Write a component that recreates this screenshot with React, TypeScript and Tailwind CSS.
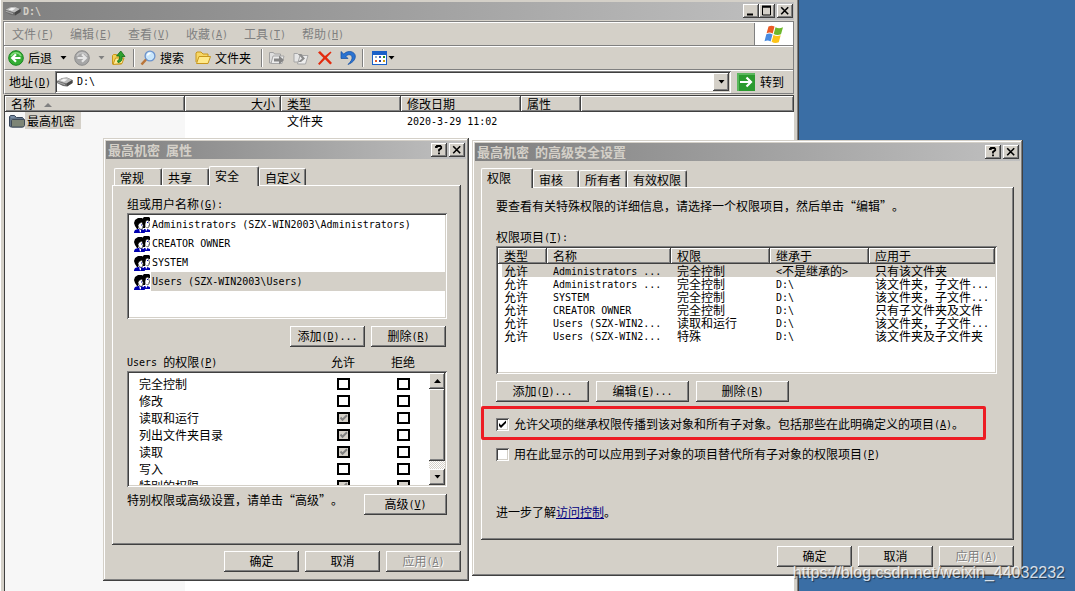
import { useState, type ReactNode } from "react";

const raised =
  "bg-[#d4d0c8] shadow-[inset_-1px_-1px_#404040,inset_1px_1px_#fff,inset_-2px_-2px_#808080]";
const sunken =
  "bg-white shadow-[inset_1px_1px_#808080,inset_-1px_-1px_#fff,inset_2px_2px_#404040,inset_-2px_-2px_#d4d0c8]";
const windowFrame =
  "bg-[#d4d0c8] shadow-[inset_-1px_-1px_#404040,inset_1px_1px_#d4d0c8,inset_-2px_-2px_#808080,inset_2px_2px_#fff]";
const headerCell =
  "bg-[#d4d0c8] shadow-[inset_-1px_-1px_#404040,inset_1px_1px_#fff,inset_-2px_-2px_#808080]";
const halfWidth =
  "font-['DejaVu_Sans_Mono','Liberation_Mono',monospace] text-[10px] leading-none whitespace-pre align-[1px]";

// Half-width characters sit on a 6px grid next to the 12px ideographs.
function Txt({ children, hotkey }: { children: string; hotkey?: string }) {
  return (
    <>
      {children.split(/([\x20-\x7e]+)/).map((part, index) =>
        index % 2 ? (
          <span key={index} className={halfWidth}>
            {part}
          </span>
        ) : (
          part
        )
      )}
      {hotkey ? (
        <span className={halfWidth}>
          (<u className="underline-offset-1">{hotkey}</u>)
        </span>
      ) : null}
    </>
  );
}

type PushButtonProps = {
  label: string;
  hotkey?: string;
  tail?: string;
  disabled?: boolean;
  width?: string;
};

function PushButton({ label, hotkey, tail, disabled, width = "w-[75px]" }: PushButtonProps) {
  return (
    <button
      type="button"
      disabled={disabled}
      className={`${raised} ${width} h-[21px] shrink-0 pb-[2px] text-center whitespace-nowrap ${
        disabled ? "text-[#808080] [text-shadow:1px_1px_#fff]" : ""
      }`}
    >
      <Txt hotkey={hotkey}>{label}</Txt>
      {tail ? <Txt>{tail}</Txt> : null}
    </button>
  );
}

function CaptionButton({ name, children }: { name: string; children: ReactNode }) {
  return (
    <button type="button" aria-label={name} className={`${raised} flex h-[14px] w-4 items-center justify-center`}>
      <svg viewBox="0 0 16 14" className="h-[14px] w-4" fill="none" stroke="#000" strokeWidth="1.6" aria-hidden="true">
        {children}
      </svg>
    </button>
  );
}

const closeGlyph = <path d="M4.2 3.2l7 7M11.2 3.2l-7 7" />;
const helpGlyph = <path d="M5 5V3.8h1V3h3.4l.8.8v1.4L8 7v1.6M8 9.6v1.6" strokeWidth="1.8" />;

function Dialog({ title, className, children }: { title: string; className: string; children: ReactNode }) {
  return (
    <section aria-label={title} className={`absolute ${windowFrame} p-[3px] ${className}`}>
      <header className="flex h-[18px] items-center gap-[2px] bg-linear-to-r from-[#808080] to-[#c0c0c0] pr-px pl-[2px]">
        <h2 className="flex-1 text-[13px] leading-[18px] font-bold text-[#d4d0c8]">
          <Txt>{title}</Txt>
        </h2>
        <CaptionButton name="帮助">{helpGlyph}</CaptionButton>
        <CaptionButton name="关闭">{closeGlyph}</CaptionButton>
      </header>
      {children}
    </section>
  );
}

type TabItem = { label: string; width: string };

function TabStrip({ tabs, initial, className }: { tabs: TabItem[]; initial: number; className?: string }) {
  const [active, setActive] = useState(initial);

  return (
    <div role="tablist" className={`relative z-10 mt-[7px] -mb-px flex h-5 items-end pb-px ${className ?? ""}`}>
      {tabs.map((tab, index) => (
        <button
          key={tab.label}
          type="button"
          role="tab"
          aria-selected={index === active}
          onClick={() => setActive(index)}
          className={`${tab.width} rounded-t-[2px] border-t border-r border-l border-t-white border-r-[#404040] border-l-white bg-[#d4d0c8] pl-[5px] text-left shadow-[inset_-1px_0_#808080] ${
            index === active ? "-mb-px h-5 pb-[2px]" : "h-[17px] leading-[17px]"
          }`}
        >
          {tab.label}
        </button>
      ))}
    </div>
  );
}

function UsersIcon() {
  return (
    <svg viewBox="0 0 16 16" className="size-4 shrink-0" aria-hidden="true">
      <path d="M10 12h3l3 1v2h-6z" fill="#0000b0" />
      <path d="M8 2l2-2h5l1 1v3h-3l-1 3-1 4H9L8 8z" fill="#000" />
      <path d="M12 3.500l2.500-.5.5 3 1 2h-1v2l-2 1-2-1V7z" fill="#fff" stroke="#000" strokeWidth=".6" />
      <path d="M11 10l2 1v2l-1 1z" fill="#fff" />
      <path d="M0 15l1-2 3-1h3l3 1 1 3H0z" fill="#0000b0" />
      <path d="M0 6l1-3 3-2h4l1 2-1 2-3 2-1 5H3L1 9z" fill="#000" />
      <path d="M5 6.500l3-1.500.7 2.500 1 2h-1v2L7 12.500l-2-1-1-3z" fill="#fff" stroke="#000" strokeWidth=".6" />
      <path d="M5 12l2 1v2l-1 .5z" fill="#fff" />
      <path d="M7 7.500h1v1H7zM13 5h1v1h-1z" fill="#0000b0" />
    </svg>
  );
}

function DriveIcon() {
  return (
    <svg viewBox="0 0 16 12" className="h-3 w-4 shrink-0" aria-hidden="true">
      <path d="M0 5l5-3 5-.5L15.500 4v3L10 10.500 6 10 0 7z" fill="#6b6b6b" />
      <path d="M.5 4.800L5 2.200 10 1.700l5 2.300-5.500 3.500z" fill="#bdbdbd" />
      <path d="M3.500 4.500L6.500 2.700l4 .8L7 5.700z" fill="#f4f4f4" />
      <path d="M9.500 7.500L15.500 4v3L10 10.500z" fill="#484848" />
      <path d="M.5 5.500l7.500 2.500v1.300L.5 6.700z" fill="#a5a5a5" />
    </svg>
  );
}

function FolderIcon({ dim }: { dim?: boolean }) {
  return dim ? (
    <svg viewBox="0 0 16 14" className="h-[14px] w-4 shrink-0" aria-hidden="true">
      <path d="M.5 12V2.500l1-1h4l2 2h6l1 1V12l-1 1h-12z" fill="#64768a" stroke="#38465a" />
      <path d="M2.500 12.500v-6l1-1h12v6l-1 1.500h-11z" fill="#7d8576" stroke="#3f4b58" />
      <path d="M2 3h3.500" stroke="#8ea5c0" />
    </svg>
  ) : (
    <svg viewBox="0 0 16 14" className="h-[14px] w-4 shrink-0" aria-hidden="true">
      <path d="M1 11V2l1-1h4l2 2h5v3" fill="#f7d765" stroke="#c8961c" />
      <path d="M1.500 12.500L4 5.500h11.500L13 12.500z" fill="#ffe98a" stroke="#c8961c" />
    </svg>
  );
}

function DownArrow({ muted }: { muted?: boolean }) {
  return (
    <svg viewBox="0 0 7 4" className="h-1 w-[7px] shrink-0" aria-hidden="true">
      <path d="M.5 0h6L3.500 3.500z" fill={muted ? "#808080" : "#000"} />
    </svg>
  );
}

function RoundArrow({ muted }: { muted?: boolean }) {
  return (
    <svg viewBox="0 0 16 16" className="size-4 shrink-0" aria-hidden="true">
      <circle cx="8" cy="8" r="7.300" fill={muted ? "#a6a6a6" : "#35ae35"} stroke={muted ? "#8c8c8c" : "#16831d"} />
      <path d="M3 6a5.500 5.500 0 0 1 10 0" fill="none" stroke={muted ? "#c4c4c4" : "#80da77"} strokeWidth="1.500" />
      <path
        d={muted ? "M3.500 8h8M8 4.200L11.800 8 8 11.800" : "M12.500 8h-8M8 4.200L4.200 8 8 11.800"}
        fill="none"
        stroke={muted ? "#e6e6e6" : "#fff"}
        strokeWidth="2.200"
      />
    </svg>
  );
}

function FolderUpIcon() {
  return (
    <svg viewBox="0 0 16 16" className="size-4" aria-hidden="true">
      <path d="M1.500 14V5.500l1-1h3l1 1h4V14z" fill="#f3cf56" stroke="#c8961c" />
      <path d="M2 14.500L4.500 8H13l-2 5.500z" fill="#ffec93" stroke="#c8961c" />
      <path d="M7 12.500c3.500-.5 4.500-2.500 4-6h3L9.800 1 5.500 6h2.800c.5 2.500.2 4-1.800 4.800z" fill="#2fa12f" stroke="#126b16" strokeWidth=".8" />
    </svg>
  );
}

function SearchIcon() {
  return (
    <svg viewBox="0 0 16 16" className="size-4 shrink-0" aria-hidden="true">
      <path d="M6.500 9L1.500 14.500" stroke="#b9753a" strokeWidth="2.600" />
      <circle cx="10" cy="6" r="4.900" fill="#c9e6fb" stroke="#6c93cc" strokeWidth="1.300" />
      <path d="M7.500 5.500c.3-1.500 1.500-2.300 3-2.300" fill="none" stroke="#fff" strokeWidth="1.400" />
    </svg>
  );
}

function MoveToIcon() {
  return (
    <svg viewBox="0 0 16 16" className="size-4" aria-hidden="true">
      <path d="M.5 13V2.500h4l1 1.500h6v9z" fill="#dedede" stroke="#a0a0a0" />
      <path d="M2 13.500L4 6h11l-2 7.500z" fill="#ececec" stroke="#a6a6a6" />
      <path d="M5 8.500h5V5.500l5 4.500-5 4.500v-3H5z" fill="#858585" />
    </svg>
  );
}

function CopyToIcon() {
  return (
    <svg viewBox="0 0 16 16" className="size-4" aria-hidden="true">
      <path d="M1 12V3.500h3.500l1 1H9V12z" fill="#e6e6e6" stroke="#a6a6a6" />
      <path d="M4.500 14L7 5.500h8L12.500 14z" fill="#ededed" stroke="#a6a6a6" />
      <path d="M5 4l4 4.500L5 12h3l4-3.500L8 4z" fill="#8c8c8c" />
    </svg>
  );
}

function DeleteIcon() {
  return (
    <svg viewBox="0 0 16 16" className="size-4" aria-hidden="true">
      <path d="M1 2.500L3 1l5 5 5.500-4.500 1 1L9.800 7.500 15 13l-1.800 1.500L8 9.300 2.500 15 1 13.800 6.300 7.800z" fill="#e32b0e" />
    </svg>
  );
}

function UndoIcon() {
  return (
    <svg viewBox="0 0 16 16" className="size-4" aria-hidden="true">
      <path d="M1 1.500v7h7L5.800 6.200C8 4 11.500 4.200 12 7c.4 2.500-1 4.300-4 7.500 5-2 7.500-5 7.300-8.500C15 1.500 8-.5 3.800 4z" fill="#2a73d2" stroke="#134c9f" strokeWidth=".7" />
    </svg>
  );
}

function ViewsIcon() {
  return (
    <svg viewBox="0 0 16 14" className="h-[14px] w-4" shapeRendering="crispEdges" aria-hidden="true">
      <path d="M.5.5h14v13H.5z" fill="#fff" stroke="#1960c8" />
      <path d="M0 0h15v4H0z" fill="#1960c8" />
      <path d="M3 5h2v2H3z" fill="#96aec4" />
      <path d="M7 5h2v2H7z" fill="#3456c0" />
      <path d="M11 5h2v2h-2z" fill="#228b22" />
      <path d="M3 9h2v2H3z" fill="#e35d28" />
      <path d="M7 9h2v2H7z" fill="#23419c" />
      <path d="M11 9h2v2h-2z" fill="#d19b12" />
    </svg>
  );
}

function WindowsFlag() {
  return (
    <svg viewBox="0 0 20 19" className="h-[19px] w-5" aria-hidden="true">
      <path d="M4.500 1.500C7 .2 8.500.5 10.500 1.600L8.700 8.500C6.500 7.300 5 7.300 2.600 8.300z" fill="#ea5a24" />
      <path d="M11.500 2.200c2.500 1.300 4.500 1.300 7.500 0l-2 7c-2.700 1.200-5 1-7.300-.2z" fill="#6db72c" />
      <path d="M2.300 9.300c2.400-1 4-1 6.200.2l-1.900 7C4.500 15.300 2.900 15.300.5 16.300z" fill="#4a8be0" />
      <path d="M9.500 10c2.400 1.300 4.400 1.300 7.200.2l-1.900 7c-2.800 1.200-4.800 1-7.200-.4z" fill="#fcc419" />
    </svg>
  );
}

function ToolSeparator({ className }: { className: string }) {
  return <span className={`h-[18px] w-[2px] shrink-0 border-r border-l border-r-white border-l-[#808080] ${className}`} />;
}

const menus = [
  ["文件", "F"],
  ["编辑", "E"],
  ["查看", "V"],
  ["收藏", "A"],
  ["工具", "T"],
  ["帮助", "H"]
];

function Explorer() {
  return (
    <main className="absolute inset-y-0 left-0 flex w-[799px] flex-col bg-[#d4d0c8] pt-[2px] pr-[5px] pl-[3px] shadow-[inset_-1px_0_#404040,inset_-2px_0_#808080,inset_1px_0_#fff]">
      <header className="flex h-[18px] shrink-0 items-center bg-linear-to-r from-[#808080] to-[#c0c0c0] pr-px pl-[2px]">
        <DriveIcon />
        <h1 className="flex-1 pl-[2px] leading-[18px] font-bold text-[#d4d0c8]">
          <Txt>D:\</Txt>
        </h1>
        <CaptionButton name="最小化">
          <path d="M4 10.500h6" strokeWidth="2" />
        </CaptionButton>
        <CaptionButton name="最大化">
          <path d="M3.500 3v8h8V3z" strokeWidth="1" />
          <path d="M3 2.500h9" strokeWidth="2" />
        </CaptionButton>
        <span className="w-[2px]" />
        <CaptionButton name="关闭">{closeGlyph}</CaptionButton>
      </header>

      <div className="mt-px shrink-0 border-t border-r border-l border-[#808080]">
        <nav className="flex h-6 items-stretch border-t border-b border-t-white border-b-[#808080]">
          <div className="flex flex-1 items-center gap-4 border-l border-white pl-[7px]">
            {menus.map(([label, key]) => (
              <button key={key} type="button" className="w-[42px] text-left whitespace-nowrap text-[#808080]">
                <Txt hotkey={key}>{label}</Txt>
              </button>
            ))}
          </div>
          <div className="flex w-[39px] items-center justify-center border-l border-[#808080] bg-white">
            <WindowsFlag />
          </div>
        </nav>
        <div className="flex h-6 items-center border-t border-b border-l border-t-white border-b-[#808080] border-l-white pl-[3px]">
          <button type="button" className="flex items-center gap-1 whitespace-nowrap">
            <RoundArrow />
            后退
          </button>
          <button type="button" aria-label="后退列表" className="ml-2">
            <DownArrow />
          </button>
          <button type="button" aria-label="前进" className="ml-[7px]">
            <RoundArrow muted />
          </button>
          <button type="button" aria-label="前进列表" className="ml-2">
            <DownArrow muted />
          </button>
          <button type="button" aria-label="向上" className="ml-[6px]">
            <FolderUpIcon />
          </button>
          <ToolSeparator className="ml-[6px]" />
          <button type="button" className="ml-[5px] flex items-center gap-1 whitespace-nowrap">
            <SearchIcon />
            搜索
          </button>
          <button type="button" className="ml-[11px] flex items-center gap-1 whitespace-nowrap">
            <FolderIcon />
            文件夹
          </button>
          <ToolSeparator className="ml-[10px]" />
          <button type="button" aria-label="移至" className="ml-[6px]">
            <MoveToIcon />
          </button>
          <button type="button" aria-label="复制到" className="ml-2">
            <CopyToIcon />
          </button>
          <button type="button" aria-label="删除" className="ml-2">
            <DeleteIcon />
          </button>
          <button type="button" aria-label="撤销" className="ml-[7px]">
            <UndoIcon />
          </button>
          <ToolSeparator className="ml-[6px]" />
          <button type="button" aria-label="查看方式" className="ml-2 flex items-center">
            <ViewsIcon />
            <DownArrow />
          </button>
        </div>
        <div className="flex h-6 items-center border-t border-b border-l border-t-white border-b-[#808080] border-l-white pl-1">
          <label htmlFor="address" className="w-[46px] shrink-0 whitespace-nowrap">
            <Txt hotkey="D">地址</Txt>
          </label>
          <div className={`${sunken} flex h-[22px] flex-1 items-center p-[2px]`}>
            <DriveIcon />
            <input
              id="address"
              defaultValue="D:\"
              className="min-w-0 flex-1 bg-transparent pl-1 font-['DejaVu_Sans_Mono','Liberation_Mono',monospace] text-[10px] outline-none"
            />
            <button type="button" aria-label="地址列表" className={`${raised} flex h-[18px] w-4 items-center justify-center`}>
              <DownArrow />
            </button>
          </div>
          <button type="button" className="ml-[6px] flex w-[56px] items-center gap-[5px] whitespace-nowrap">
            <svg viewBox="0 0 18 18" className="size-[18px] shrink-0" aria-hidden="true">
              <path d="M0 0h18v18H0z" fill="#2b9a2f" />
              <path d="M0 0h18v2H2v16H0z" fill="#5bb75d" />
              <path d="M3 9h11M9.500 4.500L14 9l-4.500 4.500" fill="none" stroke="#fff" strokeWidth="2.200" />
            </svg>
            转到
          </button>
        </div>
      </div>

      <div className="mt-px ml-px flex min-h-0 flex-1 flex-col border-t border-l border-t-[#404040] border-l-[#404040] bg-white">
        <table className="w-full table-fixed border-separate border-spacing-0">
          <colgroup>
            <col className="w-[180px]" />
            <col className="w-[96px]" />
            <col className="w-[120px]" />
            <col className="w-[120px]" />
            <col className="w-[60px]" />
            <col />
          </colgroup>
          <thead>
            <tr className="h-4 text-left leading-4">
              <th className={`${headerCell} pl-[6px] font-normal`}>
                名称
                <svg viewBox="0 0 8 4" className="ml-[9px] inline-block h-1 w-2 align-[2px]" aria-hidden="true">
                  <path d="M4 0l4 4H0z" fill="#808080" />
                </svg>
              </th>
              <th className={`${headerCell} pr-[6px] text-right font-normal`}>大小</th>
              <th className={`${headerCell} pl-[6px] font-normal`}>类型</th>
              <th className={`${headerCell} pl-[6px] font-normal`}>修改日期</th>
              <th className={`${headerCell} pl-[6px] font-normal`}>属性</th>
              <th className={headerCell} />
            </tr>
          </thead>
          <tbody>
            <tr className="h-[17px]">
              <td className="bg-[#f7f7f7] pl-1">
                <div className="flex items-center">
                  <FolderIcon dim />
                  <span className="bg-[#d4d0c8] pr-[6px] pl-[2px] leading-[17px]">最高机密</span>
                </div>
              </td>
              <td />
              <td className="pl-[6px]">文件夹</td>
              <td className="pl-[6px]">
                <Txt>2020-3-29 11:02</Txt>
              </td>
              <td />
              <td />
            </tr>
          </tbody>
        </table>
        <div className="w-[180px] flex-1 bg-[#f7f7f7]" />
      </div>
    </main>
  );
}

const groups = [
  "Administrators (SZX-WIN2003\\Administrators)",
  "CREATOR OWNER",
  "SYSTEM",
  "Users (SZX-WIN2003\\Users)"
];

const rights = [
  { name: "完全控制", inherited: false },
  { name: "修改", inherited: false },
  { name: "读取和运行", inherited: true },
  { name: "列出文件夹目录", inherited: true },
  { name: "读取", inherited: true },
  { name: "写入", inherited: false },
  { name: "特别的权限", inherited: true, denyLocked: true }
];

function RightBox({ label, checked, locked }: { label: string; checked?: boolean; locked?: boolean }) {
  return (
    <span className="relative mx-auto block h-3 w-[13px]">
      <input
        type="checkbox"
        aria-label={label}
        defaultChecked={checked}
        disabled={locked}
        className="block h-3 w-[13px] appearance-none border-2 border-black bg-white disabled:bg-[#d4d0c8]"
      />
      {checked ? (
        <svg viewBox="0 0 13 12" className="pointer-events-none absolute inset-0 h-3 w-[13px]" aria-hidden="true">
          <path d="M3.500 5.500l2 2.300 4.500-4.500" fill="none" stroke="#808080" strokeWidth="2" />
        </svg>
      ) : null}
    </span>
  );
}

function PropertiesDialog() {
  const [selected, setSelected] = useState(3);

  return (
    <Dialog title="最高机密 属性" className="top-[138px] left-[103px] w-[366px]">
      <div className="pr-[5px] pb-[6px] pl-[6px]">
        <TabStrip
          initial={2}
          className="pl-[2px]"
          tabs={[
            { label: "常规", width: "w-[48px]" },
            { label: "共享", width: "w-[47px]" },
            { label: "安全", width: "w-[50px]" },
            { label: "自定义", width: "w-[47px]" }
          ]}
        />
        <div className={`${raised} pt-[11px] pr-[14px] pb-[30px] pl-[15px]`}>
          <p>
            <Txt hotkey="G">组或用户名称</Txt>
            <Txt>:</Txt>
          </p>
          <ul role="listbox" aria-label="组或用户名称" className={`${sunken} mt-px h-[106px] p-[2px]`}>
            {groups.map((group, index) => (
              <li
                key={group}
                role="option"
                aria-selected={index === selected}
                onClick={() => setSelected(index)}
                className="flex h-[19px] items-center gap-px pl-[5px]"
              >
                <UsersIcon />
                <span className={`h-[19px] flex-1 pl-px leading-[18px] whitespace-nowrap ${index === selected ? "bg-[#d4d0c8]" : ""}`}>
                  <Txt>{group}</Txt>
                </span>
              </li>
            ))}
          </ul>
          <div className="mt-[7px] flex justify-end gap-[6px] pr-px">
            <PushButton label="添加" hotkey="D" tail="..." />
            <PushButton label="删除" hotkey="R" />
          </div>
          <div className="mt-[7px] flex pr-[18px] text-center">
            <span className="flex-1 text-left">
              <Txt hotkey="P">Users 的权限</Txt>
            </span>
            <span className="w-[68px]">允许</span>
            <span className="w-[52px]">拒绝</span>
          </div>
          <div className={`${sunken} mt-px h-[116px] p-[2px]`}>
            <div className="flex h-full overflow-hidden">
              <div className="flex-1 overflow-hidden pt-[2px]">
                <table className="w-full table-fixed border-separate border-spacing-0">
                  <tbody>
                    {rights.map((right) => (
                      <tr key={right.name} className="h-[17px]">
                        <td className="pl-[10px]">{right.name}</td>
                        <td className="w-[68px]">
                          <RightBox label={`允许 ${right.name}`} checked={right.inherited} locked={right.inherited} />
                        </td>
                        <td className="w-[52px]">
                          <RightBox label={`拒绝 ${right.name}`} locked={right.denyLocked} />
                        </td>
                      </tr>
                    ))}
                  </tbody>
                </table>
              </div>
              <div className="flex w-4 flex-col bg-[repeating-conic-gradient(#fff_0_25%,#d4d0c8_0_50%)] bg-[size:2px_2px]">
                <button type="button" aria-label="向上滚动" className={`${raised} flex h-4 items-center justify-center`}>
                  <svg viewBox="0 0 7 4" className="h-1 w-[7px]" aria-hidden="true">
                    <path d="M3.500 0L7 4H0z" />
                  </svg>
                </button>
                <div className={`${raised} h-[72px]`} />
                <button type="button" aria-label="向下滚动" className={`${raised} mt-auto flex h-4 items-center justify-center`}>
                  <DownArrow />
                </button>
              </div>
            </div>
          </div>
          <div className="mt-[5px] flex items-start justify-between">
            <p className="whitespace-nowrap">特别权限或高级设置，请单击“高级”。</p>
            <div className="pt-[2px]">
              <PushButton label="高级" hotkey="V" width="w-[83px]" />
            </div>
          </div>
        </div>
        <footer className="mt-[6px] flex justify-end gap-[6px]">
          <PushButton label="确定" />
          <PushButton label="取消" />
          <PushButton label="应用" hotkey="A" disabled />
        </footer>
      </div>
    </Dialog>
  );
}

const entries = [
  ["允许", "Administrators ...", "完全控制", "<不是继承的>", "只有该文件夹"],
  ["允许", "Administrators ...", "完全控制", "D:\\", "该文件夹，子文件..."],
  ["允许", "SYSTEM", "完全控制", "D:\\", "该文件夹，子文件..."],
  ["允许", "CREATOR OWNER", "完全控制", "D:\\", "只有子文件夹及文件"],
  ["允许", "Users (SZX-WIN2...", "读取和运行", "D:\\", "该文件夹，子文件..."],
  ["允许", "Users (SZX-WIN2...", "特殊", "D:\\", "该文件夹及子文件夹"]
];

type CheckRowProps = { id: string; label: string; hotkey: string; tail?: string; checked?: boolean };

function CheckRow({ id, label, hotkey, tail, checked: initial = false }: CheckRowProps) {
  const [checked, setChecked] = useState(initial);

  return (
    <div className="mt-[14px] flex items-center gap-[5px]">
      <span className="relative size-[13px]">
        <input
          id={id}
          type="checkbox"
          checked={checked}
          onChange={(event) => setChecked(event.target.checked)}
          className={`${sunken} block size-[13px] appearance-none`}
        />
        {checked ? (
          <svg viewBox="0 0 13 13" className="pointer-events-none absolute inset-0 size-[13px]" aria-hidden="true">
            <path d="M3 5v3l2 2 5-5V2.500L5 7.300z" />
          </svg>
        ) : null}
      </span>
      <label htmlFor={id} className="whitespace-nowrap">
        <Txt hotkey={hotkey}>{label}</Txt>
        {tail}
      </label>
    </div>
  );
}

function AdvancedDialog() {
  return (
    <Dialog title="最高机密 的高级安全设置" className="top-[140px] left-[472px] w-[551px]">
      <div className="px-[6px] pb-[6px]">
        <TabStrip
          initial={0}
          tabs={[
            { label: "权限", width: "w-[52px]" },
            { label: "审核", width: "w-[46px]" },
            { label: "所有者", width: "w-[48px]" },
            { label: "有效权限", width: "w-[60px]" }
          ]}
        />
        <div className={`${raised} pt-[11px] pr-[17px] pb-5 pl-[15px]`}>
          <p>要查看有关特殊权限的详细信息，请选择一个权限项目，然后单击“编辑”。</p>
          <p className="mt-[15px]">
            <Txt hotkey="T">权限项目</Txt>
            <Txt>:</Txt>
          </p>
          <div className={`${sunken} mt-px h-[128px] p-[2px]`}>
            <table className="w-full table-fixed border-separate border-spacing-0 text-left">
              <colgroup>
                <col className="w-[49px]" />
                <col className="w-[124px]" />
                <col className="w-[99px]" />
                <col className="w-[99px]" />
                <col />
              </colgroup>
              <thead>
                <tr className="h-4 leading-4">
                  {["类型", "名称", "权限", "继承于", "应用于"].map((name) => (
                    <th key={name} className={`${headerCell} pl-[6px] font-normal`}>
                      {name}
                    </th>
                  ))}
                </tr>
              </thead>
              <tbody>
                {entries.map((entry, row) => (
                  <tr key={row} className={`h-[13px] leading-3 ${row === 0 ? "bg-[#d4d0c8]" : ""}`}>
                    {entry.map((cell, column) => (
                      <td
                        key={column}
                        className={`whitespace-nowrap ${column === 0 ? "border-l-4 border-white pl-[2px]" : "pl-[6px]"}`}
                      >
                        <Txt>{cell}</Txt>
                      </td>
                    ))}
                  </tr>
                ))}
              </tbody>
            </table>
          </div>
          <div className="mt-[7px] flex gap-[7px]">
            <PushButton label="添加" hotkey="D" tail="..." width="w-[93px]" />
            <PushButton label="编辑" hotkey="E" tail="..." width="w-[93px]" />
            <PushButton label="删除" hotkey="R" width="w-[93px]" />
          </div>
          <CheckRow
            id="inherit"
            label="允许父项的继承权限传播到该对象和所有子对象。包括那些在此明确定义的项目"
            hotkey="A"
            tail="。"
            checked
          />
          <CheckRow id="replace" label="用在此显示的可以应用到子对象的项目替代所有子对象的权限项目" hotkey="P" />
          <p className="mt-[42px]">
            进一步了解
            <a href="#access-control" className="text-[#000080] underline">
              访问控制
            </a>
            。
          </p>
        </div>
        <footer className="mt-[6px] flex justify-end gap-[6px]">
          <PushButton label="确定" />
          <PushButton label="取消" />
          <PushButton label="应用" hotkey="A" disabled />
        </footer>
      </div>
    </Dialog>
  );
}

export default function App() {
  return (
    <div
      lang="zh-CN"
      className="relative h-screen overflow-hidden bg-[#3a6ea5] font-['Noto_Sans_CJK_SC',sans-serif] text-[12px] leading-4 text-black [text-spacing-trim:space-all]"
    >
      <Explorer />
      <PropertiesDialog />
      <AdvancedDialog />
      <div className="pointer-events-none absolute top-[406px] left-[481px] h-[34px] w-[505px] rounded-[2px] border-3 border-[#ed1c24]" />
      <p className="absolute right-[10px] bottom-[8px] font-['Liberation_Sans',Arial,sans-serif] text-[16px] leading-5 text-white/80 [text-shadow:1px_1px_1px_#0008]">
        https://blog.csdn.net/weixin_44032232
      </p>
    </div>
  );
}
